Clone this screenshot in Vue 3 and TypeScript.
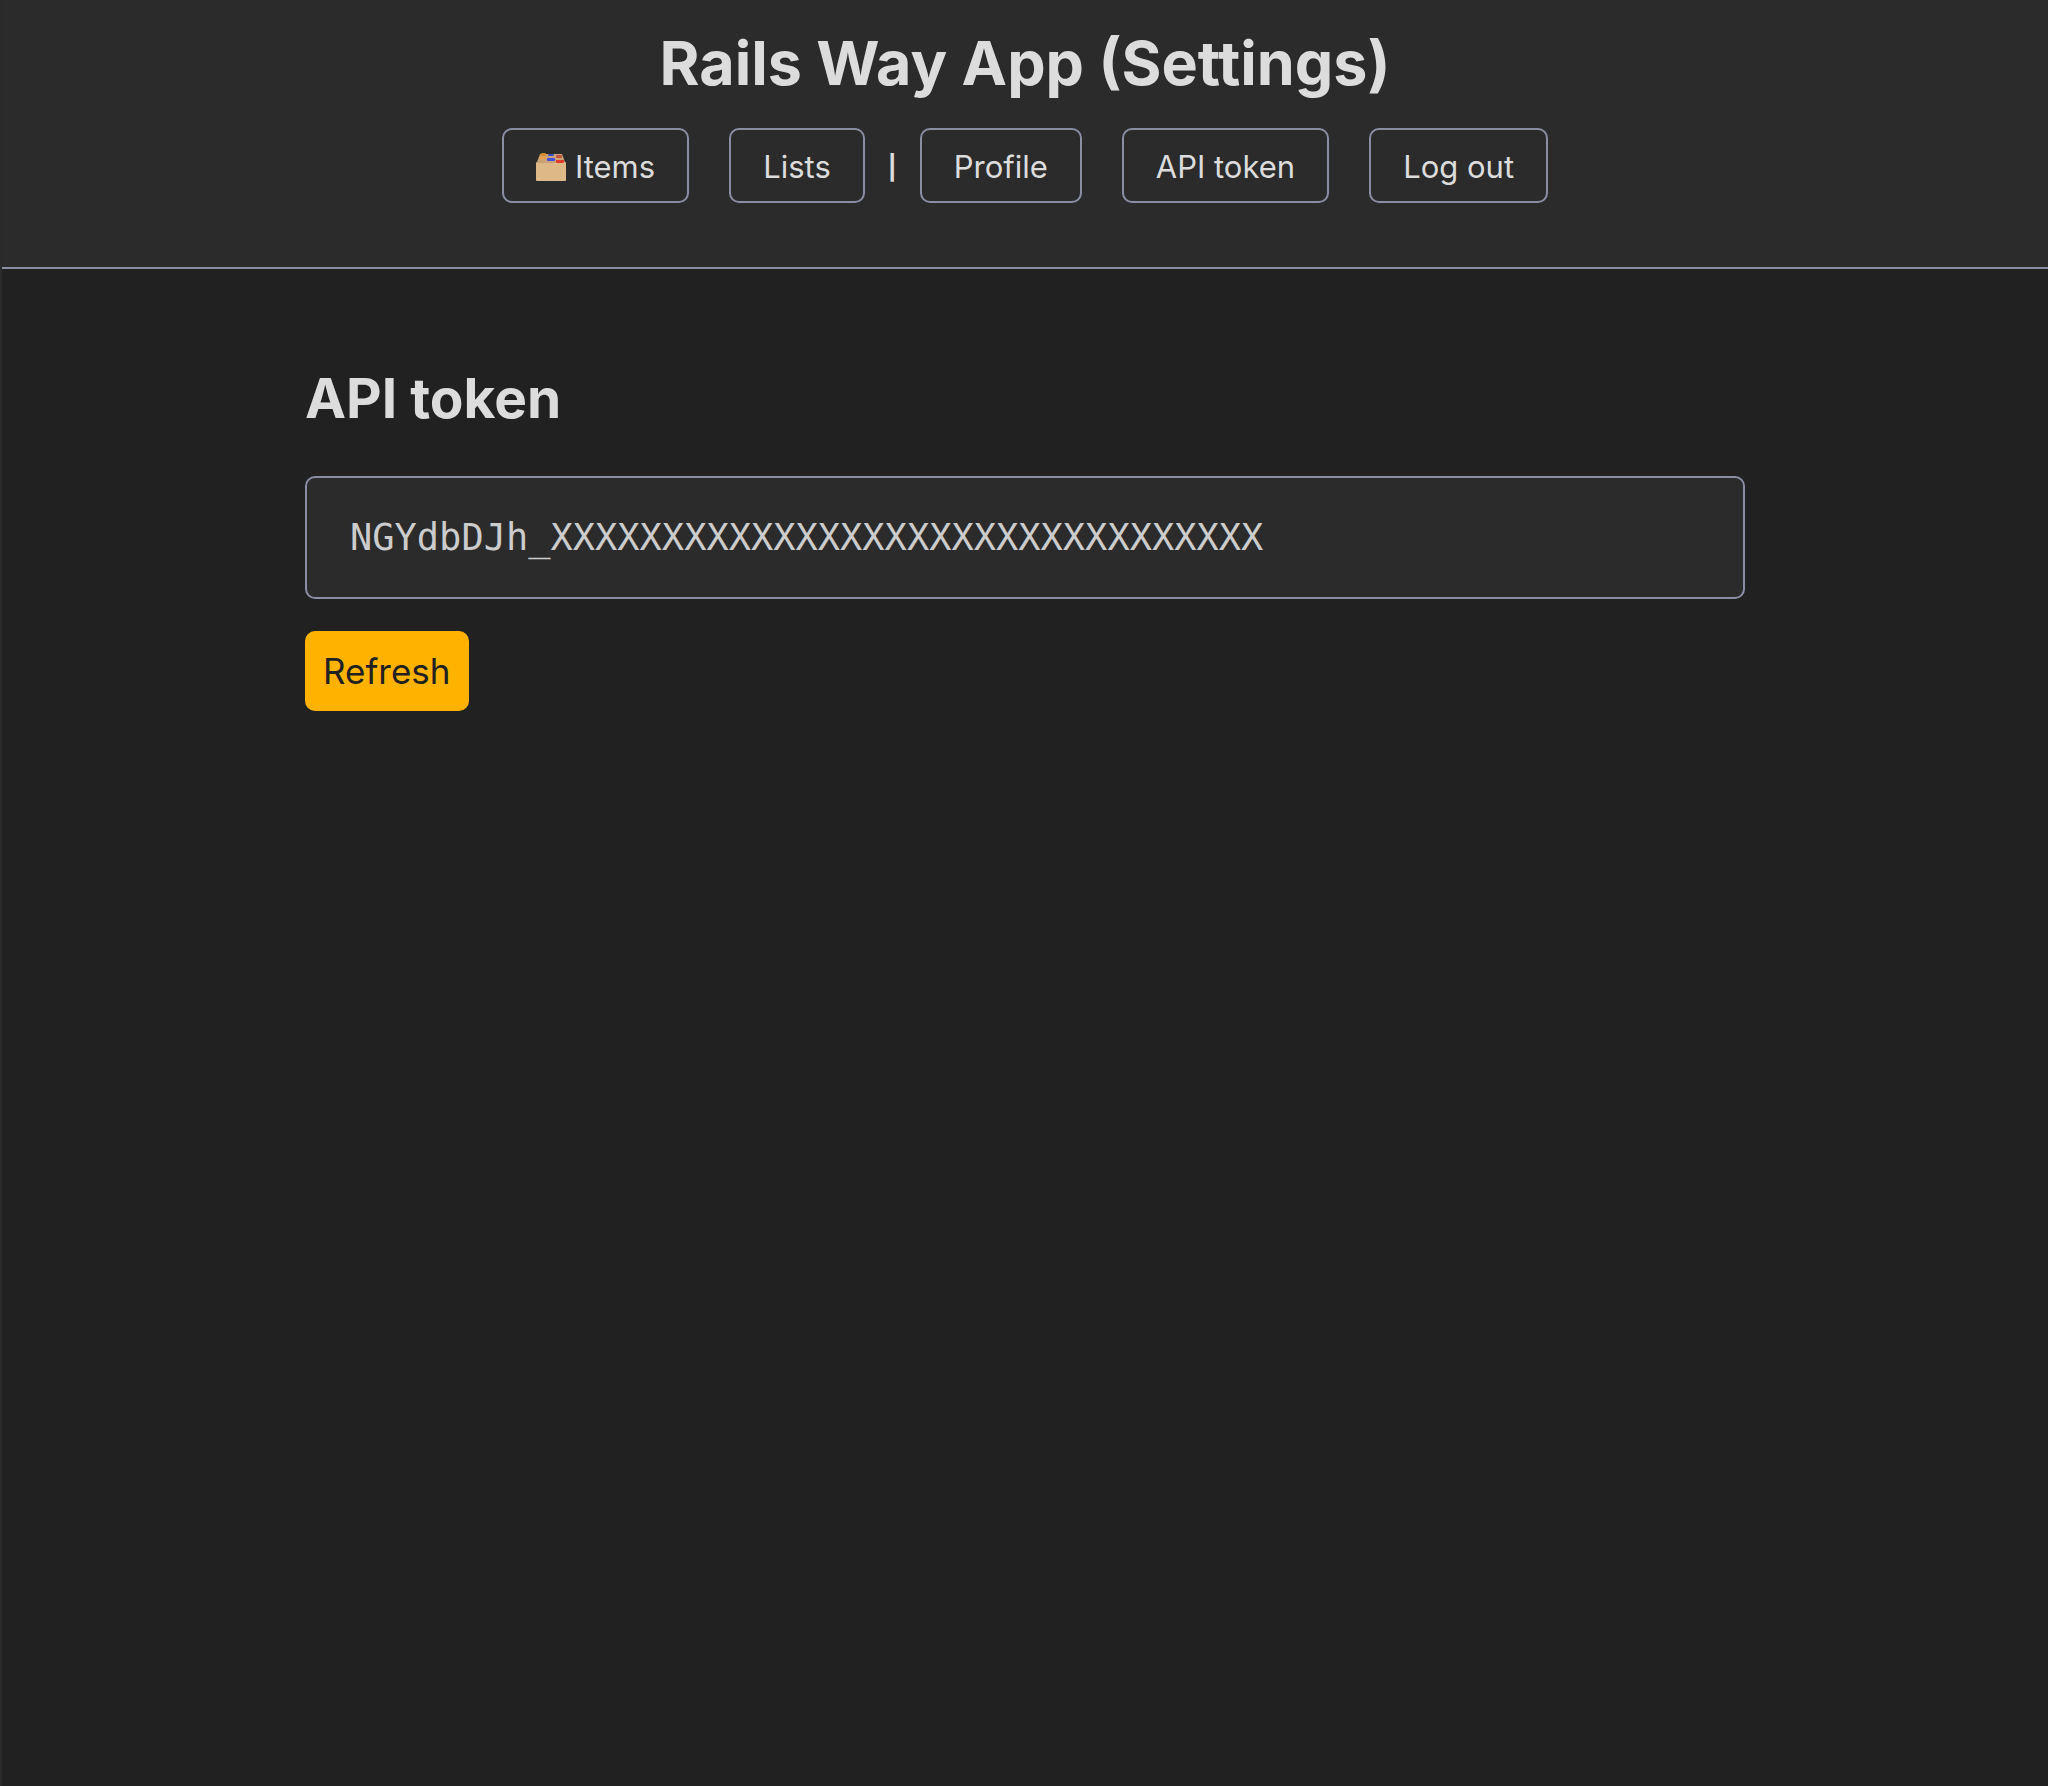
<script setup lang="ts">
import { ref } from 'vue'

const token = ref<string>('NGYdbDJh_' + 'X'.repeat(32))
</script>

<template>
  <div class="page">
    <header class="header">
      <h1 class="title">Rails Way App (Settings)</h1>
      <nav class="nav" aria-label="Main">
        <div class="group">
          <a class="link" href="#items">
            <svg class="icon" viewBox="0 0 30 30" aria-hidden="true">
              <path d="M4 2 1 10h28L26 2z" fill="#c9a376" />
              <path d="M5 2q0-1 1-1h3q1 0 1 1v2H4z" fill="#d98a2b" />
              <path d="M3 6q0-1 1-1h5q1 0 1 1v1H3z" fill="#f0a04a" />
              <rect x="12" y="2" width="6" height="2" rx="1" fill="#3f48c8" />
              <rect x="20" y="3" width="6" height="3" rx="1" fill="#c4503f" />
              <rect x="11" y="6" width="8" height="3" rx="1" fill="#4450dc" />
              <rect x="20" y="8" width="8" height="3" rx="1" fill="#e03a2c" />
              <path d="M0 11q0-1 1-1h28q1 0 1 1v17q0 1-1 1H1q-1 0-1-1z" fill="#deb887" />
              <path d="M1 10h19v1H1z" fill="#c79f70" />
              <rect x="20" y="8" width="8" height="3" rx="1" fill="#e03a2c" />
            </svg>
            <span>Items</span>
          </a>
          <a class="link" href="#lists">Lists</a>
        </div>
        <span class="divider">|</span>
        <div class="group">
          <a class="link" href="#profile">Profile</a>
          <a class="link" href="#token" aria-current="page">API token</a>
          <button class="link" type="button">Log out</button>
        </div>
      </nav>
    </header>
    <main class="main">
      <h2 class="heading">API token</h2>
      <pre class="token"><code>{{ token }}</code></pre>
      <button class="refresh" type="button">Refresh</button>
    </main>
  </div>
</template>

<style>
body {
  margin: 0;
  background: #212121;
}
</style>

<style scoped>
.page {
  box-sizing: border-box;
  min-height: 100vh;
  border-left: 2px solid #2a2a2d;
  background: #212121;
  color: #dcdcdc;
  font-family: Inter, 'Liberation Sans', sans-serif;
}

.header {
  padding: 27px 16px 64px;
  border-bottom: 2px solid #898ea4;
  background: #2b2b2b;
  text-align: center;
}

.title {
  margin: 0 0 29px;
  font-size: 61px;
  line-height: 72px;
  font-weight: 700;
}

.nav {
  display: flex;
  justify-content: center;
  align-items: center;
  gap: 23px;
  font-size: 31px;
  line-height: 39px;
}

.group {
  display: flex;
  gap: 40px;
}

.divider {
  padding-top: 4px;
  font-size: 24px;
  font-weight: 700;
}

.link {
  display: flex;
  align-items: center;
  gap: 9px;
  padding: 17px 32px 15px;
  border: 2px solid #898ea4;
  border-radius: 10px;
  background: none;
  color: inherit;
  font: inherit;
  text-decoration: none;
  cursor: pointer;
}

.icon {
  width: 30px;
  height: 30px;
}

.main {
  box-sizing: border-box;
  width: 100%;
  max-width: 1440px;
  margin: 0 auto;
  padding: 95px 0 32px;
}

.heading {
  margin: 0 0 44px;
  font-size: 55px;
  line-height: 68px;
  font-weight: 700;
}

.token {
  margin: 0 0 32px;
  padding: 32px 43px;
  border: 2px solid #898ea4;
  border-radius: 10px;
  background: #2b2b2b;
  color: #cccccc;
  font-family: 'DejaVu Sans Mono', monospace;
  font-size: 37px;
  line-height: 55px;
  overflow: auto;
}

.token code {
  font: inherit;
}

.refresh {
  padding: 16px 18px;
  border: 0;
  border-radius: 10px;
  background: #ffb300;
  color: #212121;
  font-family: inherit;
  font-size: 35px;
  line-height: 48px;
  cursor: pointer;
}
</style>
